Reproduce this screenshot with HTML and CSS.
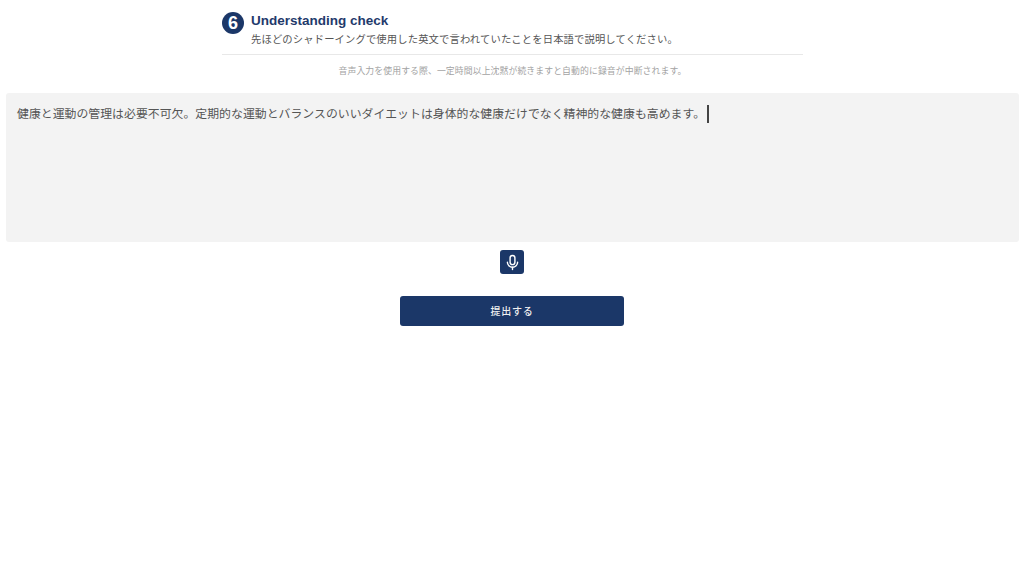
FILE: index.html
```html
<!DOCTYPE html>
<html lang="ja">
<head>
<meta charset="utf-8">
<title>Understanding check</title>
<link rel="stylesheet" href="styles.css">
</head>
<body>
<main class="page">
  <header class="head">
    <div class="head-row">
      <span class="badge">6</span>
      <div class="head-text">
        <h1 class="title">Understanding check</h1>
        <p class="sub">先ほどのシャドーイングで使用した英文で言われていたことを日本語で説明してください。</p>
      </div>
    </div>
  </header>
  <p class="note">音声入力を使用する際、一定時間以上沈黙が続きますと自動的に録音が中断されます。</p>
  <div class="answer"><span class="answer-text">健康と運動の管理は必要不可欠。定期的な運動とバランスのいいダイエットは身体的な健康だけでなく精神的な健康も高めます。</span><span class="caret"></span></div>
  <button class="mic" type="button" aria-label="音声入力">
    <svg class="mic-icon" viewBox="0 0 24 24" fill="none" stroke="#fff" stroke-width="2" stroke-linecap="round">
      <rect x="8.6" y="2" width="6.8" height="13" rx="3.4"/>
      <path d="M4.8 11.5a7.2 7.2 0 0 0 14.4 0"/>
      <path d="M12 18.7V22"/>
    </svg>
  </button>
  <button class="submit" type="button">提出する</button>
</main>
</body>
</html>
```

FILE: styles.css
```css
* { box-sizing: border-box; }
html, body { margin: 0; height: 100%; background: #fff; }
body {
  font-family: "Liberation Sans", "Noto Sans CJK JP", sans-serif;
  color: #444;
}
.page {
  display: flex;
  flex-direction: column;
  align-items: center;
  padding: 12px 5px 0 6px;
}
.head {
  width: 581px;
  height: 43px;
  border-bottom: 1px solid #e8e8e8;
}
.head-row { display: flex; gap: 7px; }
.badge {
  width: 22px;
  height: 22px;
  flex: none;
  border-radius: 50%;
  background: #1b3768;
  color: #fff;
  font-size: 18px;
  font-weight: 700;
  line-height: 22px;
  text-align: center;
}
.head-text { min-width: 0; }
.title {
  margin: 0;
  font-size: 13.5px;
  line-height: 17px;
  font-weight: 700;
  color: #1f3a6b;
}
.sub {
  margin: 3px 0 0;
  font-size: 10.3px;
  letter-spacing: 0.15px;
  line-height: 16px;
  color: #555;
  white-space: nowrap;
}
.note {
  margin: 9px 0 0;
  font-size: 8.85px;
  letter-spacing: 0.1px;
  line-height: 14px;
  color: #a3a3a3;
  white-space: nowrap;
}
.answer {
  align-self: stretch;
  height: 149px;
  margin-top: 15px;
  padding: 12px 11px;
  background: #f3f3f3;
  border-radius: 3px;
  font-size: 11.86px;
  letter-spacing: 0.03px;
  line-height: 18px;
  color: #555;
  display: flex;
  align-items: flex-start;
}
.answer-text { white-space: nowrap; }
.caret {
  width: 2px;
  height: 18px;
  margin-left: 2px;
  background: #444;
}
.mic {
  width: 24px;
  height: 24px;
  margin-top: 8px;
  margin-right: 1px;
  padding: 0;
  border: 0;
  border-radius: 3px;
  background: #1b3768;
  display: flex;
  align-items: center;
  justify-content: center;
}
.mic-icon { width: 17px; height: 17px; }
.submit {
  width: 224px;
  height: 30px;
  margin-top: 22px;
  margin-right: 1px;
  padding: 0 0 2px;
  border: 0;
  border-radius: 3px;
  background: #1b3768;
  color: #f0f0f0;
  font-family: inherit;
  font-size: 10px;
  font-weight: 500;
  letter-spacing: 0.8px;
}
```
